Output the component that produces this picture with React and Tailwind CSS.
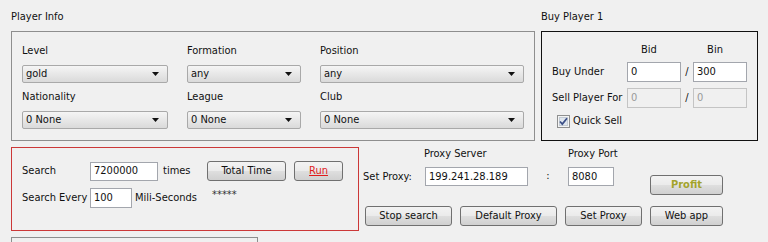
import React from 'react';

const FONT = { fontFamily: '"DejaVu Sans Condensed", "Liberation Sans", Arial, sans-serif' };

function Dropdown({ value, className }) {
  return (
    <div className={`flex h-[18px] items-center justify-between rounded-[2px] border border-[#a9a9a9] bg-linear-to-b from-[#f5f5f5] to-[#dadada] pl-[3px] pr-[8px] ${className}`}>
      <span className="leading-[14px]">{value}</span>
      <svg width="7" height="4" viewBox="0 0 7 4">
        <path d="M0 0h7L3.5 4z" fill="#111" />
      </svg>
    </div>
  );
}

function Field({ label, value, className }) {
  return (
    <div className={className}>
      <div className="mb-[7px] h-[14px] leading-[14px]">{label}</div>
      <Dropdown value={value} className="w-full" />
    </div>
  );
}

function TextBox({ value, className, disabled }) {
  return (
    <div
      className={`flex items-center border pl-[3px] leading-[14px] ${
        disabled ? 'border-[#c4c4c4] bg-[#f0f0f0] text-[#9a9a9a]' : 'border-[#a3a6ad] bg-white text-[#111]'
      } ${className}`}
    >
      {value}
    </div>
  );
}

function Button({ children, className }) {
  return (
    <div
      className={`flex h-[20px] items-center justify-center rounded-[3px] border border-[#707070] bg-[linear-gradient(#f3f3f3,#ebebeb_48%,#dedede_52%,#d0d0d0)] leading-[14px] ${className}`}
    >
      {children}
    </div>
  );
}

export default function App() {
  return (
    <div className="h-[242px] w-[768px] overflow-hidden bg-[#f0f0f0] pl-[11px] pt-[10px] text-[11px] text-[#111]" style={FONT}>
      {/* Top row */}
      <div className="flex">
        {/* Player Info */}
        <div className="w-[524px]">
          <div className="mb-[7px] h-[14px] leading-[14px]">Player Info</div>
          <div className="h-[110px] border border-[#8e8e8e] pl-[10px] pt-[12px]">
            <div className="grid grid-cols-[146px_114px_204px] gap-x-[19px] gap-y-[7px]">
              <Field label="Level" value="gold" />
              <Field label="Formation" value="any" />
              <Field label="Position" value="any" />
              <Field label="Nationality" value="0 None" />
              <Field label="League" value="0 None" />
              <Field label="Club" value="0 None" />
            </div>
          </div>
        </div>

        {/* Buy Player */}
        <div className="ml-[6px] w-[217px]">
          <div className="mb-[7px] h-[14px] leading-[14px]">Buy Player 1</div>
          <div className="h-[110px] border border-[#111] pl-[10px] pt-[11px]">
            <div className="flex h-[14px] leading-[14px]">
              <div className="w-[75px]" />
              <div className="w-[54px] pr-[10px] text-center">Bid</div>
              <div className="w-[12px]" />
              <div className="w-[54px] pr-[10px] text-center">Bin</div>
            </div>
            <div className="mt-[5px] flex h-[20px] items-center">
              <div className="w-[75px] leading-[14px]">Buy Under</div>
              <TextBox value="0" className="h-[20px] w-[54px]" />
              <div className="w-[12px] text-center">/</div>
              <TextBox value="300" className="h-[20px] w-[54px]" />
            </div>
            <div className="mt-[6px] flex h-[20px] items-center">
              <div className="w-[75px] leading-[14px]">Sell Player For</div>
              <TextBox value="0" disabled className="h-[20px] w-[54px]" />
              <div className="w-[12px] text-center">/</div>
              <TextBox value="0" disabled className="h-[20px] w-[54px]" />
            </div>
            <div className="mt-[6px] flex h-[14px] items-center pl-[5px]">
              <svg width="13" height="13" viewBox="0 0 13 13">
                <rect x="0.5" y="0.5" width="12" height="12" fill="#f4f4f4" stroke="#8e8f8f" />
                <rect x="2.5" y="2.5" width="8" height="8" fill="#dfe6ee" stroke="#c3cbd4" />
                <path d="M3 6.5l2.3 2.6L10 3.2" fill="none" stroke="#3b4f87" strokeWidth="1.7" />
              </svg>
              <span className="ml-[3px] leading-[14px]">Quick Sell</span>
            </div>
          </div>
        </div>
      </div>

      {/* Bottom row */}
      <div className="mt-[6px] flex">
        {/* Search box */}
        <div className="h-[84px] w-[348px] border border-[#cc3838] pl-[10px] pt-[13px]">
          <div className="flex h-[20px] items-center">
            <div className="w-[68px] leading-[14px]">Search</div>
            <TextBox value="7200000" className="h-[19px] w-[68px]" />
            <div className="w-[49px] pl-[5px] leading-[14px]">times</div>
            <Button className="w-[79px]">Total Time</Button>
            <Button className="ml-[8px] w-[49px]">
              <span className="text-[#e01b1b] underline">Run</span>
            </Button>
          </div>
          <div className="mt-[7px] flex h-[20px] items-center">
            <div className="w-[68px] leading-[14px]">Search Every</div>
            <TextBox value="100" className="h-[20px] w-[42px]" />
            <div className="ml-[3px] w-[77px] leading-[14px]">Mili-Seconds</div>
            <div className="mb-[6px] leading-[14px] text-[#333]">*****</div>
          </div>
        </div>

        {/* Proxy area */}
        <div className="ml-[4px] flex flex-col">
          <div className="flex h-[14px] leading-[14px]">
            <div className="ml-[61px] w-[144px]">Proxy Server</div>
            <div>Proxy Port</div>
          </div>
          <div className="mt-[6px] flex items-start">
            <div className="flex h-[19px] w-[62px] items-center leading-[14px]">Set Proxy:</div>
            <TextBox value="199.241.28.189" className="h-[19px] w-[103px]" />
            <div className="flex h-[19px] w-[40px] items-center justify-center">:</div>
            <TextBox value="8080" className="h-[19px] w-[46px]" />
            <Button className="ml-[36px] mt-[8px] w-[73px]">
              <span className="font-bold text-[#a3a32c]">Profit</span>
            </Button>
          </div>
          <div className="ml-[2px] mt-[11px] flex gap-[8px]">
            <Button className="w-[87px]">Stop search</Button>
            <Button className="w-[97px]">Default Proxy</Button>
            <Button className="w-[77px]">Set Proxy</Button>
            <Button className="w-[73px]">Web app</Button>
          </div>
        </div>
      </div>

      {/* Partial panel below */}
      <div className="mt-[6px] h-[20px] w-[247px] border border-[#8e8e8e]" />
    </div>
  );
}
